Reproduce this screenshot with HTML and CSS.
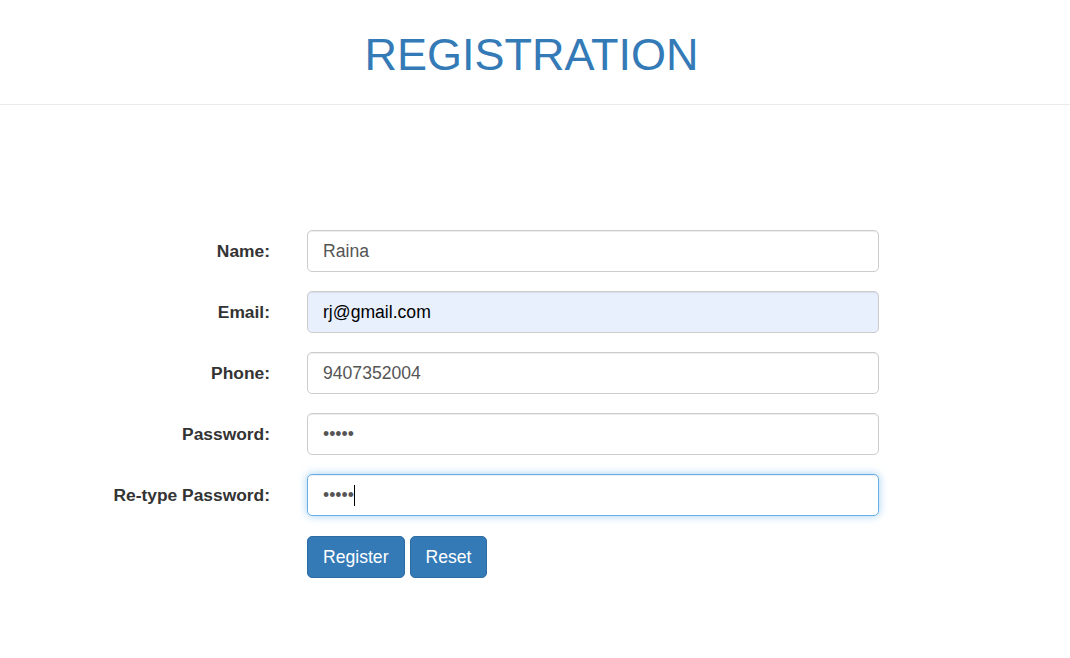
FILE: index.html
```html
<!DOCTYPE html>
<html>
<head>
<meta charset="utf-8">
<title>Registration</title>
<link rel="stylesheet" href="styles.css">
</head>
<body>
<header class="page-header">
  <h1 class="title">REGISTRATION</h1>
</header>
<form class="reg-form">
  <label class="lbl" for="name">Name:</label>
  <input class="field" id="name" type="text" value="Raina">
  <label class="lbl" for="email">Email:</label>
  <input class="field autofill" id="email" type="text" value="rj@gmail.com">
  <label class="lbl" for="phone">Phone:</label>
  <input class="field" id="phone" type="text" value="9407352004">
  <label class="lbl" for="pw">Password:</label>
  <input class="field" id="pw" type="password" value="12345">
  <label class="lbl" for="pw2">Re-type Password:</label>
  <div class="field-wrap">
    <input class="field focused" id="pw2" type="password" value="12345">
    <span class="caret"></span>
  </div>
  <div class="actions">
    <button type="button" class="btn">Register</button>
    <button type="button" class="btn">Reset</button>
  </div>
</form>
</body>
</html>
```
FILE: styles.css
```css
* { box-sizing: border-box; }
html, body { margin: 0; padding: 0; background: #fff; }
body {
  font-family: "Liberation Sans", Arial, sans-serif;
  color: #333;
  width: 1070px;
  height: 658px;
  overflow: hidden;
}
.page-header {
  border-bottom: 1px solid #eaeaea;
  padding: 29px 0 23px;
  text-align: center;
}
.title {
  margin: 0 0 0 -7px;
  font-weight: 400;
  font-size: 45px;
  line-height: 52px;
  color: #337ab7;
}
.reg-form {
  display: grid;
  grid-template-columns: 270px 572px;
  column-gap: 37px;
  row-gap: 19px;
  align-items: center;
  margin-top: 125px;
}
.lbl {
  text-align: right;
  font-weight: 700;
  font-size: 17.4px;
  color: #333;
}
.field {
  display: block;
  width: 572px;
  height: 42px;
  padding: 0 15px;
  font-family: "Liberation Sans", Arial, sans-serif;
  font-size: 17.6px;
  color: #555;
  background: #fff;
  border: 1px solid #ccc;
  border-radius: 5px;
  box-shadow: inset 0 1px 1px rgba(0,0,0,.075);
  outline: none;
}
.field.autofill {
  background: #e8f0fe;
  color: #000;
}
.field.focused {
  border-color: #66afe9;
  box-shadow: inset 0 1px 1px rgba(0,0,0,.075), 0 0 8px rgba(102,175,233,.6);
}
.field-wrap { position: relative; }
.caret {
  position: absolute;
  left: 47px;
  top: 11px;
  width: 1px;
  height: 21px;
  background: #000;
}
.actions {
  grid-column: 2;
  display: flex;
  gap: 5px;
  margin-top: 1px;
}
.btn {
  height: 42px;
  padding: 0 15px;
  font-family: "Liberation Sans", Arial, sans-serif;
  font-size: 17.6px;
  color: #fff;
  background: #337ab7;
  border: 1px solid #2e6da4;
  border-radius: 5px;
  cursor: pointer;
}
```
